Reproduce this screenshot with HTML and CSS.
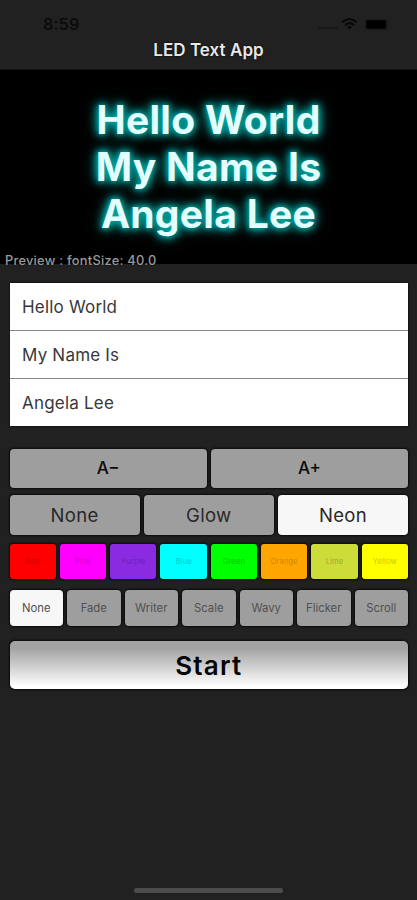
FILE: index.html
```html
<!DOCTYPE html>
<html lang="en">
<head>
<meta charset="utf-8">
<title>LED Text App</title>
<link rel="stylesheet" href="styles.css">
</head>
<body>
<header class="appbar">
  <div class="status">
    <span class="time">8:59</span>
    <svg class="signals" width="72" height="16" viewBox="0 0 72 16">
      <path d="M2 12H22" stroke="#191919" stroke-width="1.6"/>
      <g fill="none" stroke="#070707" stroke-width="2.1">
        <path d="M26.3 6.2Q33.5 -.2 40.7 6.2"/>
        <path d="M29.1 9.1Q33.5 5.2 37.9 9.1"/>
      </g>
      <path d="M31.2 11Q33.5 9.2 35.8 11L33.5 13.4Z" fill="#070707"/>
      <rect x="48.9" y="2.9" width="23" height="11" rx="3" fill="#1b1b1b"/>
      <rect x="50.2" y="4.2" width="19.8" height="8.6" rx="1.5"/>
    </svg>
  </div>
  <h1 class="title">LED Text App</h1>
</header>
<section class="preview">
  <div class="led"><p>Hello World</p><p>My Name Is</p><p>Angela Lee</p></div>
  <p class="caption">Preview : fontSize: 40.0</p>
</section>
<main>
  <div class="fields">
    <div class="field">Hello World</div>
    <div class="field">My Name Is</div>
    <div class="field">Angela Lee</div>
  </div>
  <div class="row sizes"><button>A−</button><button>A+</button></div>
  <div class="row effects"><button>None</button><button>Glow</button><button class="on">Neon</button></div>
  <div class="row colors">
    <button class="red">Red</button><button class="pink">Pink</button><button class="purple">Purple</button><button class="blue">Blue</button><button class="green">Green</button><button class="orange">Orange</button><button class="lime">Lime</button><button class="yellow">Yellow</button>
  </div>
  <div class="row motions">
    <button class="on">None</button><button>Fade</button><button>Writer</button><button>Scale</button><button>Wavy</button><button>Flicker</button><button>Scroll</button>
  </div>
  <button class="start">Start</button>
</main>
<div class="home"></div>
</body>
</html>
```
FILE: styles.css
```css
* { box-sizing: border-box; margin: 0; padding: 0; }
body {
  width: 417px;
  height: 900px;
  overflow: hidden;
  display: flex;
  flex-direction: column;
  background: #212121;
  font-family: Inter, sans-serif;
}
.appbar { height: 70px; padding-top: 16px; border-bottom: 1px solid #121212; }
.status {
  height: 16px;
  padding: 0 29px 0 43px;
  display: flex;
  justify-content: space-between;
  align-items: center;
}
.time { font-size: 16.5px; font-weight: 500; color: #0a0a0a; letter-spacing: 0.1px; }
.title {
  margin-top: 7px;
  text-align: center;
  font-size: 17px;
  line-height: 22px;
  font-weight: 600;
  letter-spacing: 0.05px;
  color: #e8e8e8;
  text-shadow: 0 0 2px #000;
}
.preview {
  height: 194px;
  background: #000;
  position: relative;
  padding-top: 26px;
}
.led {
  text-align: center;
  font-size: 39px;
  line-height: 47px;
  font-weight: 700;
  letter-spacing: 0.3px;
  color: #e4ffff;
  text-shadow: 0 0 5px #00a5a0, 0 0 8px #00a8a4, 0 0 11px #009a96, 0 0 16px #00807c;
}
.caption {
  position: absolute;
  left: 5px;
  bottom: -5px;
  font-size: 12.8px;
  line-height: 16px;
  font-weight: 500;
  letter-spacing: 0.27px;
  color: #9a9a9a;
  text-shadow: 0 0 2px #000;
}
main { padding: 19px 9px 0 9.5px; flex: 1; }
.fields {
  height: 142.5px;
  display: flex;
  flex-direction: column;
  background: #fff;
  box-shadow: 0 0 2px #000;
}
.field {
  flex: 1;
  padding: 1.5px 0 0 12.5px;
  display: flex;
  align-items: center;
  font-size: 17px;
  letter-spacing: 0.2px;
  color: #383838;
}
.field + .field { border-top: 1px solid #858585; }
.row { display: flex; gap: 4px; }
button {
  flex: 1 1 0;
  min-width: 0;
  border: 0;
  border-radius: 4px;
  background: #9e9e9e;
  font-family: inherit;
  color: #282828;
  text-align: center;
  white-space: nowrap;
  box-shadow: 0 0 2px 1px #0a0a0a;
}
button.on { background: #f7f7f7; }
.sizes { height: 39px; margin-top: 23px; }
.sizes button { font-size: 17px; font-weight: 500; color: #080808; }
.effects { height: 40px; margin-top: 7px; }
.effects button { font-size: 18.5px; letter-spacing: 0.3px; }
.colors { height: 35px; margin-top: 9px; }
.colors button { font-size: 7.5px; letter-spacing: 0.2px; border-radius: 3px; }
.colors .red { background: #f00; color: #d00000; }
.colors .pink { background: #f0f; color: #d000d2; }
.colors .purple { background: #8a2be2; color: #6c1fba; }
.colors .blue { background: #0ff; color: #00cbd0; }
.colors .green { background: #0f0; color: #00c800; }
.colors .orange { background: #ffa500; color: #ce8500; }
.colors .lime { background: #cddc39; color: #9ca92c; }
.colors .yellow { background: #ff0; color: #caca00; }
.motions { height: 36px; margin-top: 11.5px; }
.motions button { font-size: 11.3px; color: #505050; }
.start {
  display: block;
  width: 100%;
  height: 48px;
  margin-top: 15px;
  border-radius: 5px;
  background: linear-gradient(#a3a3a3 15%, #fff 95%);
  font-size: 26px;
  font-weight: 600;
  letter-spacing: 1.2px;
  color: #050505;
}
.home { width: 149px; height: 5px; margin: 0 auto 7.5px; border-radius: 3px; background: #4c4c4c; }
```
